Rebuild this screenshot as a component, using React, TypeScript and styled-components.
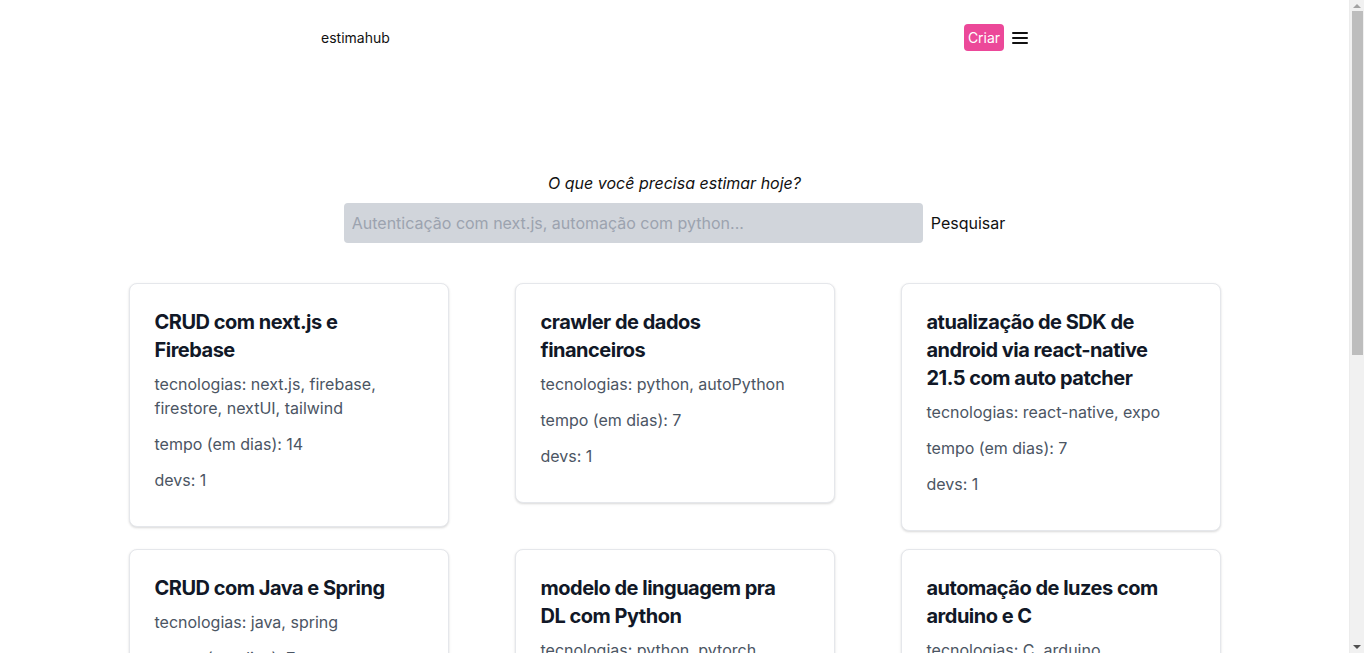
import React from 'react';
import styled, { createGlobalStyle } from 'styled-components';

const GlobalStyle = createGlobalStyle`
  * { box-sizing: border-box; }
  body {
    margin: 0 15px 0 0;
    background: #ffffff;
    font-family: Inter, "Noto Sans", "Liberation Sans", sans-serif;
    color: #111827;
  }
  p, h1, h2, h3 { margin: 0; }
`;

type Estimate = {
  id: number;
  title: string;
  techs: string;
  days: number;
  devs: number;
};

const estimates: Estimate[] = [
  { id: 1, title: 'CRUD com next.js e Firebase', techs: 'next.js, firebase, firestore, nextUI, tailwind', days: 14, devs: 1 },
  { id: 2, title: 'crawler de dados financeiros', techs: 'python, autoPython', days: 7, devs: 1 },
  { id: 3, title: 'atualização de SDK de android via react-native 21.5 com auto patcher', techs: 'react-native, expo', days: 7, devs: 1 },
  { id: 4, title: 'CRUD com Java e Spring', techs: 'java, spring', days: 7, devs: 1 },
  { id: 5, title: 'modelo de linguagem pra DL com Python', techs: 'python, pytorch', days: 30, devs: 2 },
  { id: 6, title: 'automação de luzes com arduino e C', techs: 'C, arduino', days: 10, devs: 1 },
];

const App = () => {
  return (
    <>
      <GlobalStyle />
      <Header>
        <Brand>estimahub</Brand>
        <Actions>
          <CreateButton>Criar</CreateButton>
          <MenuButton aria-label="menu">
            <svg width="16" height="14" viewBox="0 0 16 14">
              <rect x="0" y="1" width="16" height="2" rx="1" fill="#111" />
              <rect x="0" y="6" width="16" height="2" rx="1" fill="#111" />
              <rect x="0" y="11" width="16" height="2" rx="1" fill="#111" />
            </svg>
          </MenuButton>
        </Actions>
      </Header>

      <SearchSection>
        <Question>O que você precisa estimar hoje?</Question>
        <SearchRow>
          <SearchInput placeholder="Autenticação com next.js, automação com python..." />
          <SearchButton>Pesquisar</SearchButton>
        </SearchRow>
      </SearchSection>

      <CardGrid>
        {estimates.map((item) => (
          <Card key={item.id}>
            <CardTitle>{item.title}</CardTitle>
            <CardText>tecnologias: {item.techs}</CardText>
            <CardText>tempo (em dias): {item.days}</CardText>
            <CardText>devs: {item.devs}</CardText>
          </Card>
        ))}
      </CardGrid>

      <ScrollTrack aria-hidden>
        <ScrollArrow $dir="up" />
        <ScrollThumb />
        <ScrollArrow $dir="down" />
      </ScrollTrack>
    </>
  );
};

export default App;

// styled-components

const Header = styled.header`
  width: 707px;
  margin: 0 auto;
  height: 75px;
  display: flex;
  align-items: center;
  justify-content: space-between;
`;

const Brand = styled.span`
  font-size: 14px;
  color: #111;
`;

const Actions = styled.div`
  display: flex;
  align-items: center;
  gap: 8px;
`;

const CreateButton = styled.button`
  background: #ec4899;
  color: #fff;
  border: none;
  border-radius: 4px;
  width: 40px;
  height: 27px;
  padding: 0;
  font-family: inherit;
  font-size: 14px;
`;

const MenuButton = styled.button`
  background: none;
  border: none;
  padding: 0;
  display: flex;
  align-items: center;
`;

const SearchSection = styled.section`
  margin-top: 96px;
  display: flex;
  flex-direction: column;
  align-items: center;
  gap: 8px;
`;

const Question = styled.p`
  font-size: 16px;
  line-height: 24px;
  font-style: italic;
  color: #111;
`;

const SearchRow = styled.div`
  display: flex;
  align-items: center;
  gap: 8px;
`;

const SearchInput = styled.input`
  width: 579px;
  height: 40px;
  border: none;
  border-radius: 4px;
  background: #d1d5db;
  padding: 0 8px;
  font-family: inherit;
  font-size: 16px;
  color: #111;
  outline: none;

  &::placeholder {
    color: #9ca3af;
  }
`;

const SearchButton = styled.button`
  background: none;
  border: none;
  padding: 0;
  font-family: inherit;
  font-size: 16px;
  color: #111;
`;

const CardGrid = styled.main`
  display: grid;
  grid-template-columns: repeat(3, 320px);
  column-gap: 66px;
  row-gap: 18px;
  justify-content: center;
  align-items: start;
  margin-top: 40px;
  padding-bottom: 40px;
`;

const Card = styled.article`
  background: #fff;
  border: 1px solid #e5e7eb;
  border-radius: 8px;
  box-shadow: 0 1px 3px rgba(0, 0, 0, 0.1), 0 1px 2px rgba(0, 0, 0, 0.06);
  padding: 24px 40px 22px 25px;
`;

const CardTitle = styled.h3`
  font-size: 20px;
  line-height: 28px;
  font-weight: 700;
  letter-spacing: -0.5px;
  color: #111827;
  margin-bottom: 8px;
`;

const CardText = styled.p`
  font-size: 16px;
  line-height: 24px;
  color: #4b5563;
  margin-bottom: 12px;
`;

const ScrollTrack = styled.div`
  position: fixed;
  top: 0;
  right: 0;
  bottom: 0;
  width: 15px;
  background: #f1f1f1;
  border-left: 1px solid #ececec;
  display: flex;
  flex-direction: column;
  align-items: center;
`;

const ScrollArrow = styled.div<{ $dir: 'up' | 'down' }>`
  width: 0;
  height: 0;
  border-left: 4px solid transparent;
  border-right: 4px solid transparent;
  ${({ $dir }) =>
    $dir === 'up'
      ? 'border-bottom: 4px solid #a3a3a3; margin: 4px 0 3px;'
      : 'border-top: 4px solid #505050; margin: auto 0 4px;'}
`;

const ScrollThumb = styled.div`
  width: 11px;
  height: 344px;
  background: #bdbdbd;
`;
